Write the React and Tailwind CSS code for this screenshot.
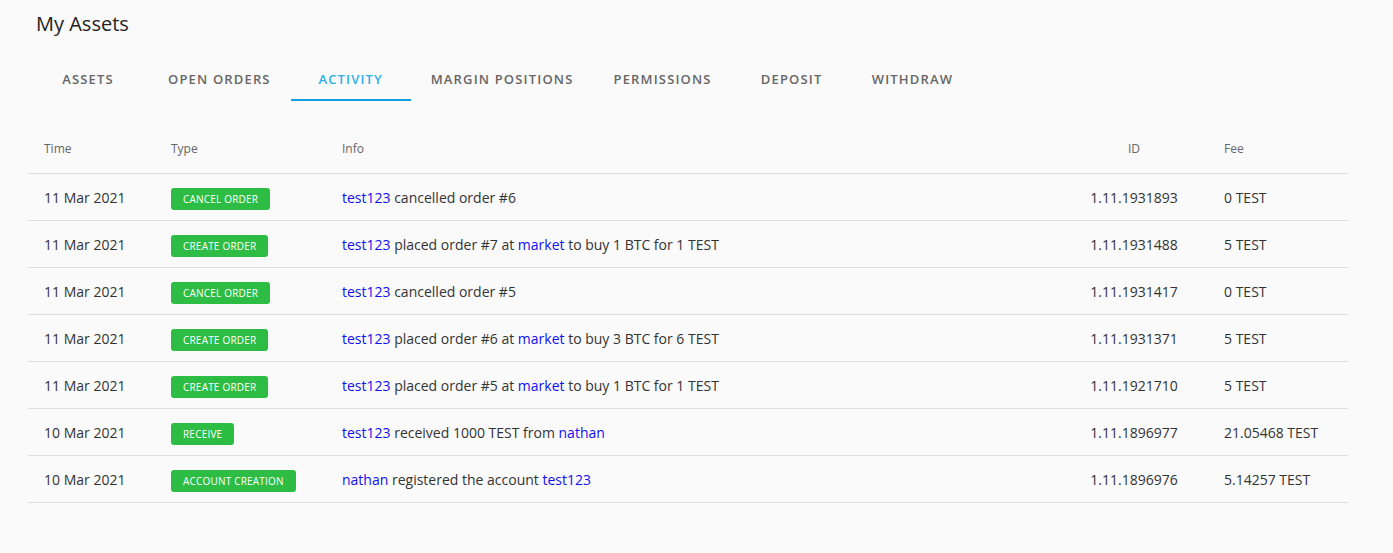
import React from "react";

const tabs = ["Assets", "Open Orders", "Activity", "Margin Positions", "Permissions", "Deposit", "Withdraw"];

const L = ({ children }) => <span className="text-[#1010ee]">{children}</span>;

const rows = [
  { time: "11 Mar 2021", type: "Cancel Order", info: <><L>test123</L> cancelled order #6</>, id: "1.11.1931893", fee: "0 TEST" },
  { time: "11 Mar 2021", type: "Create Order", info: <><L>test123</L> placed order #7 at <L>market</L> to buy 1 BTC for 1 TEST</>, id: "1.11.1931488", fee: "5 TEST" },
  { time: "11 Mar 2021", type: "Cancel Order", info: <><L>test123</L> cancelled order #5</>, id: "1.11.1931417", fee: "0 TEST" },
  { time: "11 Mar 2021", type: "Create Order", info: <><L>test123</L> placed order #6 at <L>market</L> to buy 3 BTC for 6 TEST</>, id: "1.11.1931371", fee: "5 TEST" },
  { time: "11 Mar 2021", type: "Create Order", info: <><L>test123</L> placed order #5 at <L>market</L> to buy 1 BTC for 1 TEST</>, id: "1.11.1921710", fee: "5 TEST" },
  { time: "10 Mar 2021", type: "Receive", info: <><L>test123</L> received 1000 TEST from <L>nathan</L></>, id: "1.11.1896977", fee: "21.05468 TEST" },
  { time: "10 Mar 2021", type: "Account Creation", info: <><L>nathan</L> registered the account <L>test123</L></>, id: "1.11.1896976", fee: "5.14257 TEST" },
];

export default function App() {
  return (
    <div className="w-[1393px] h-[553px] bg-[#fafafa] text-[#333] overflow-hidden" style={{ fontFamily: '"Open Sans", sans-serif' }}>
      <h1 className="pl-[36px] pt-[9px] text-[20px] leading-[30px] text-[#222] font-normal">My Assets</h1>
      <div className="flex pl-[28px] mt-[26px]">
        {tabs.map((t) => {
          const active = t === "Activity";
          return (
            <div
              key={t}
              className={`min-w-[120px] px-[20px] h-[36px] pb-[4px] flex items-center justify-center uppercase text-[13px] font-semibold tracking-[0.09em] border-b-2 ${active ? "text-[#2cb0e6] border-[#0f9fe3]" : "text-[#666] border-transparent"}`}
            >
              {t}
            </div>
          );
        })}
      </div>
      <div className="mx-[28px] mt-[25px] w-[1320px]">
        <div className="flex items-center h-[48px] border-b border-[#dedede] text-[12px] text-[#666] pb-[2px]">
          <div className="w-[143px] pl-[16px]">Time</div>
          <div className="w-[171px]">Type</div>
          <div className="flex-1">Info</div>
          <div className="w-[180px] text-center">ID</div>
          <div className="w-[124px]">Fee</div>
        </div>
        {rows.map((r, i) => (
          <div key={i} className="flex items-center h-[47px] border-b border-[#dedede] text-[14px]">
            <div className="w-[143px] pl-[16px]">{r.time}</div>
            <div className="w-[171px] flex">
              <span className="mt-[3px] inline-flex items-center h-[22px] px-[12px] rounded-[3px] bg-[#2dbd45] text-white text-[10px] tracking-[0.02em] uppercase leading-none">
                {r.type}
              </span>
            </div>
            <div className="flex-1 whitespace-nowrap">{r.info}</div>
            <div className="w-[180px] text-center">{r.id}</div>
            <div className="w-[124px] whitespace-nowrap">{r.fee}</div>
          </div>
        ))}
      </div>
    </div>
  );
}
